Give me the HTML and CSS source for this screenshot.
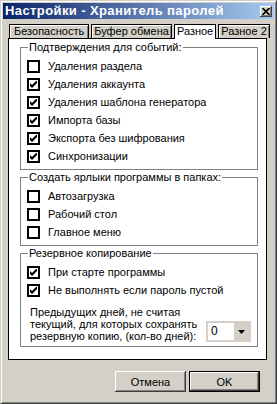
FILE: index.html
```html
<!DOCTYPE html>
<html lang="ru">
<head>
    <meta charset="UTF-8">
    <title>Настройки - Хранитель паролей</title>
    <link rel="stylesheet" href="styles.css">
</head>
<body>
<div class="window">
    <div class="titlebar">
        <span class="title">Настройки - Хранитель паролей</span>
        <span class="close-btn">
            <svg width="8" height="7" viewBox="0 0 8 7"><path d="M0.5 0 L7.5 7 M7.5 0 L0.5 7" stroke="#000" stroke-width="1.6"/></svg>
        </span>
    </div>
    <div class="dialog">
        <div class="tabs">
            <div class="tab tab-wide">Безопасность</div>
            <div class="tab">Буфер обмена</div>
            <div class="tab active">Разное</div>
            <div class="tab">Разное 2</div>
        </div>
        <div class="panel">
            <fieldset class="group">
                <legend>Подтверждения для событий:</legend>
                <div class="check-row"><span class="check"></span>Удаления раздела</div>
                <div class="check-row"><span class="check"><svg width="7" height="7" viewBox="0 0 7 7"><polygon points="0,2 2,4 6,0 7,0 7,2 2,7 0,5"/></svg></span>Удаления аккаунта</div>
                <div class="check-row"><span class="check"><svg width="7" height="7" viewBox="0 0 7 7"><polygon points="0,2 2,4 6,0 7,0 7,2 2,7 0,5"/></svg></span>Удаления шаблона генератора</div>
                <div class="check-row"><span class="check"><svg width="7" height="7" viewBox="0 0 7 7"><polygon points="0,2 2,4 6,0 7,0 7,2 2,7 0,5"/></svg></span>Импорта базы</div>
                <div class="check-row"><span class="check"><svg width="7" height="7" viewBox="0 0 7 7"><polygon points="0,2 2,4 6,0 7,0 7,2 2,7 0,5"/></svg></span>Экспорта без шифрования</div>
                <div class="check-row"><span class="check"><svg width="7" height="7" viewBox="0 0 7 7"><polygon points="0,2 2,4 6,0 7,0 7,2 2,7 0,5"/></svg></span>Синхронизации</div>
            </fieldset>
            <fieldset class="group">
                <legend>Создать ярлыки программы в папках:</legend>
                <div class="check-row"><span class="check"></span>Автозагрузка</div>
                <div class="check-row"><span class="check"></span>Рабочий стол</div>
                <div class="check-row"><span class="check"></span>Главное меню</div>
            </fieldset>
            <fieldset class="group backup">
                <legend>Резервное копирование</legend>
                <div class="check-row"><span class="check"><svg width="7" height="7" viewBox="0 0 7 7"><polygon points="0,2 2,4 6,0 7,0 7,2 2,7 0,5"/></svg></span>При старте программы</div>
                <div class="check-row"><span class="check"><svg width="7" height="7" viewBox="0 0 7 7"><polygon points="0,2 2,4 6,0 7,0 7,2 2,7 0,5"/></svg></span>Не выполнять если пароль пустой</div>
                <div class="days">
                    <div class="days-text">Предыдущих дней, не считая<br>текущий, для которых сохранять<br>резервную копию, (кол-во дней):</div>
                    <div class="combo">
                        <span class="combo-value">0</span>
                        <span class="combo-arrow"><svg width="7" height="4" viewBox="0 0 7 4"><polygon points="0,0 7,0 3.5,4"/></svg></span>
                    </div>
                </div>
            </fieldset>
        </div>
        <div class="buttons">
            <div class="btn">Отмена</div>
            <div class="btn default">OK</div>
        </div>
    </div>
</div>
</body>
</html>
```

FILE: styles.css
```css
body {
    margin: 0;
    font-family: 'Liberation Sans', Arial, sans-serif;
    font-size: 11px;
    color: #000;
    background: #d4d0c8;
}
.window {
    width: 277px;
    height: 404px;
    box-sizing: border-box;
    border: 1px solid;
    border-color: #d4d0c8 #404040 #404040 #d4d0c8;
    box-shadow: inset 1px 1px #fff, inset -1px -1px #808080;
    padding: 2px;
    background: #d4d0c8;
}
.titlebar {
    height: 16px;
    display: flex;
    align-items: center;
    justify-content: space-between;
    padding: 0 2px;
    background: linear-gradient(to right, #0a246a, #a6caf0);
    color: #fff;
    font-size: 13px;
    font-weight: bold;
    line-height: 16px;
    letter-spacing: 0.4px;
}
.close-btn {
    width: 12px;
    height: 11px;
    box-sizing: border-box;
    display: flex;
    align-items: center;
    justify-content: center;
    background: #d4d0c8;
    box-shadow: inset -1px -1px #404040, inset 1px 1px #fff, inset -2px -2px #808080;
}
.dialog {
    padding: 5px 7px 0 5px;
}
.tabs {
    display: flex;
    gap: 2px;
    height: 15px;
    width: 262px;
    margin-bottom: -1px;
    padding-left: 1px;
    box-sizing: border-box;
    overflow: hidden;
    font-size: 11px;
}
.tab {
    flex: none;
    height: 14px;
    line-height: 13px;
    padding: 0 2px;
    border: 1px solid #000;
    border-bottom: 0;
    box-sizing: border-box;
    background: #d4d0c8;
    box-shadow: inset 1px 1px #fff, inset -1px 0 #808080;
    white-space: nowrap;
}
.tab-wide {
    padding: 0 4px;
}
.tab.active {
    height: 15px;
    background: #fff;
    box-shadow: none;
    position: relative;
    z-index: 1;
}
.panel {
    width: 259px;
    height: 322px;
    box-sizing: border-box;
    padding: 2px 8px 0 11px;
    border: 1px solid #000;
    background: #fff;
}
.group {
    margin: 0;
    padding: 3px 0 4px 6px;
    border: 1px solid #808080;
}
.group + .group {
    margin-top: 1px;
}
.group legend {
    margin-left: 1px;
    padding: 0 1px;
    line-height: 13px;
}
.check-row {
    display: flex;
    align-items: center;
    height: 18px;
    white-space: nowrap;
}
.check {
    width: 13px;
    height: 13px;
    box-sizing: border-box;
    margin-right: 8px;
    border: 2px solid #000;
    display: flex;
    align-items: center;
    justify-content: center;
}
.days {
    display: flex;
    align-items: flex-end;
    margin-top: 7px;
}
.days-text {
    padding-left: 3px;
    line-height: 12px;
    white-space: nowrap;
}
.combo {
    width: 45px;
    height: 21px;
    box-sizing: border-box;
    margin: 0 6px 0 auto;
    border: 2px solid #d4d0c8;
    display: flex;
    background: #fff;
    font-size: 12px;
}
.combo-value {
    flex: 1;
    padding-left: 3px;
    line-height: 17px;
}
.combo-arrow {
    width: 15px;
    background: #d4d0c8;
    display: flex;
    align-items: center;
    justify-content: center;
}
.buttons {
    display: flex;
    justify-content: flex-end;
    gap: 3px;
    margin-top: 11px;
    padding-right: 7px;
}
.btn {
    width: 71px;
    height: 21px;
    box-sizing: border-box;
    display: flex;
    align-items: center;
    justify-content: center;
    background: #d4d0c8;
    box-shadow: inset -1px -1px #404040, inset 1px 1px #fff, inset -2px -2px #808080;
}
.btn.default {
    border: 1px solid #000;
}
```
